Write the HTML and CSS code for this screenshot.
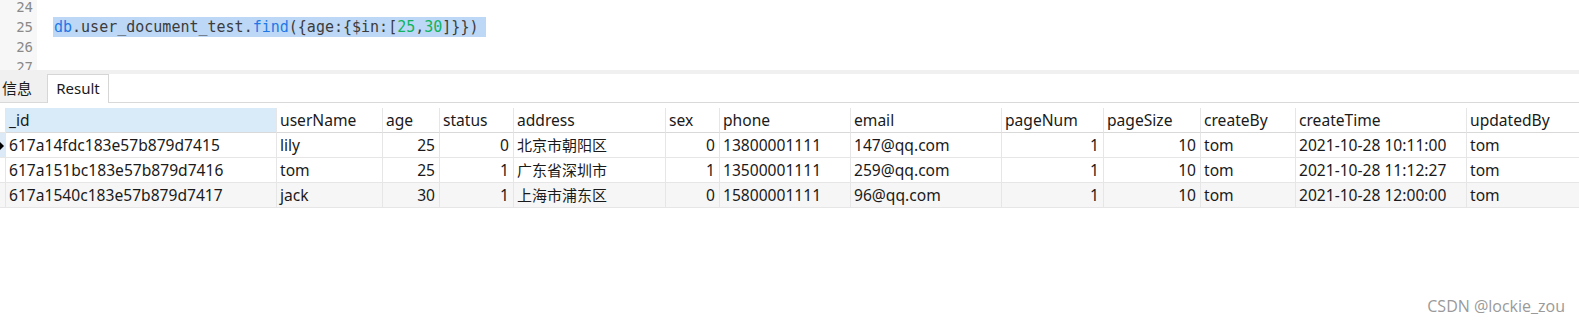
FILE: index.html
```html
<!DOCTYPE html>
<html lang="en">
<head>
    <meta charset="UTF-8">
    <meta name="viewport" content="width=device-width, initial-scale=1.0">
    <title>Query Result</title>
    <link rel="stylesheet" href="styles.css">
</head>
<body>
    <div class="editor">
        <div class="lines">
            <div class="line"><span class="num">24</span><span class="code"></span></div>
            <div class="line"><span class="num">25</span><span class="code selected"><span class="kw">db</span>.user_document_test.<span class="kw">find</span>({age:{$in:[<span class="n">25</span>,<span class="n">30</span>]}})</span></div>
            <div class="line"><span class="num">26</span><span class="code"></span></div>
            <div class="line"><span class="num">27</span><span class="code"></span></div>
        </div>
    </div>
    <div class="separator"></div>
    <div class="tabs">
        <div class="tab">信息</div>
        <div class="tab active">Result</div>
        <div class="tab-fill"></div>
    </div>
    <div class="grid">
        <div class="cell ind"></div>
        <div class="cell head sel">_id</div>
        <div class="cell head">userName</div>
        <div class="cell head">age</div>
        <div class="cell head">status</div>
        <div class="cell head">address</div>
        <div class="cell head">sex</div>
        <div class="cell head">phone</div>
        <div class="cell head">email</div>
        <div class="cell head">pageNum</div>
        <div class="cell head">pageSize</div>
        <div class="cell head">createBy</div>
        <div class="cell head">createTime</div>
        <div class="cell head last">updatedBy</div>

        <div class="cell ind current"><span class="arrow"></span></div>
        <div class="cell">617a14fdc183e57b879d7415</div>
        <div class="cell">lily</div>
        <div class="cell r">25</div>
        <div class="cell r">0</div>
        <div class="cell zh">北京市朝阳区</div>
        <div class="cell r">0</div>
        <div class="cell">13800001111</div>
        <div class="cell">147@qq.com</div>
        <div class="cell r">1</div>
        <div class="cell r">10</div>
        <div class="cell">tom</div>
        <div class="cell">2021-10-28 10:11:00</div>
        <div class="cell last">tom</div>

        <div class="cell ind"></div>
        <div class="cell">617a151bc183e57b879d7416</div>
        <div class="cell">tom</div>
        <div class="cell r">25</div>
        <div class="cell r">1</div>
        <div class="cell zh">广东省深圳市</div>
        <div class="cell r">1</div>
        <div class="cell">13500001111</div>
        <div class="cell">259@qq.com</div>
        <div class="cell r">1</div>
        <div class="cell r">10</div>
        <div class="cell">tom</div>
        <div class="cell">2021-10-28 11:12:27</div>
        <div class="cell last">tom</div>

        <div class="cell ind alt"></div>
        <div class="cell alt">617a1540c183e57b879d7417</div>
        <div class="cell alt">jack</div>
        <div class="cell alt r">30</div>
        <div class="cell alt r">1</div>
        <div class="cell alt zh">上海市浦东区</div>
        <div class="cell alt r">0</div>
        <div class="cell alt">15800001111</div>
        <div class="cell alt">96@qq.com</div>
        <div class="cell alt r">1</div>
        <div class="cell alt r">10</div>
        <div class="cell alt">tom</div>
        <div class="cell alt">2021-10-28 12:00:00</div>
        <div class="cell alt last">tom</div>
    </div>
    <div class="watermark">CSDN @lockie_zou</div>
</body>
</html>
```

FILE: styles.css
```css
body {
    margin: 0;
    background-color: #fff;
    font-family: "Noto Sans", "Noto Sans CJK SC", sans-serif;
    color: #1a1a1a;
    width: 1579px;
    height: 330px;
    overflow: hidden;
    position: relative;
}
.editor {
    height: 70px;
    overflow: hidden;
    background: linear-gradient(to right, #f7f7f7 37px, #fff 37px);
}
.lines {
    margin-top: -3px;
}
.line {
    display: flex;
    height: 20px;
    line-height: 20px;
}
.num {
    width: 33px;
    text-align: right;
    font-family: "DejaVu Sans Mono", monospace;
    font-size: 14px;
    color: #8a8a8a;
}
.code {
    margin-left: 21px;
    font-family: "DejaVu Sans Mono", monospace;
    font-size: 15px;
    color: #3c3c3c;
    white-space: pre;
}
.code.selected {
    background-color: #bcd8f6;
    margin-left: 20px;
    padding-left: 1px;
    padding-right: 8px;
}
.kw {
    color: #1f78e6;
}
.n {
    color: #10b35c;
}
.separator {
    height: 4px;
    background-color: #f0f0f0;
}
.tabs {
    display: flex;
    height: 28px;
    border-bottom: 1px solid #d9d9d9;
}
.tab {
    font-size: 15px;
    line-height: 27px;
    padding: 0 2px;
    width: 43px;
    background-color: #f0f0f0;
    border-top: 1px solid #f0f0f0;
}
.tab.active {
    width: 52px;
    padding: 0 4px;
    background-color: #fff;
    border: 1px solid #d6d6d6;
    border-bottom: none;
    margin-bottom: -1px;
    text-align: center;
}
.tab-fill {
    flex: 1;
}
.grid {
    margin-top: 5px;
    display: grid;
    grid-template-columns: 6px 271px 106px 57px 74px 152px 54px 131px 151px 102px 97px 95px 171px 112px;
    grid-auto-rows: 25px;
}
.cell {
    box-sizing: border-box;
    border-right: 1px solid #e6e6e6;
    border-bottom: 1px solid #e6e6e6;
    font-size: 15.6px;
    line-height: 24px;
    padding: 0 4px 0 3px;
    white-space: nowrap;
    overflow: hidden;
}
.cell.zh {
    font-size: 15px;
}
.cell.r {
    text-align: right;
}
.cell.last {
    border-right: none;
}
.cell.head {
    border-bottom-color: #d9d9d9;
}
.cell.head.sel {
    background-color: #d9eaf8;
}
.cell.ind {
    padding: 0;
    position: relative;
}
.cell.ind.current {
    background-color: #dce9f6;
}
.cell.alt {
    background-color: #f6f6f6;
}
.arrow {
    position: absolute;
    left: 0;
    top: 9px;
    border-left: 4px solid #000;
    border-top: 4px solid transparent;
    border-bottom: 4px solid transparent;
}
.watermark {
    position: absolute;
    right: 14px;
    bottom: 13px;
    font-family: "Open Sans", "Noto Sans", sans-serif;
    font-size: 16px;
    color: #9a9a9a;
    text-shadow: 0 0 1px #fff;
}
```
